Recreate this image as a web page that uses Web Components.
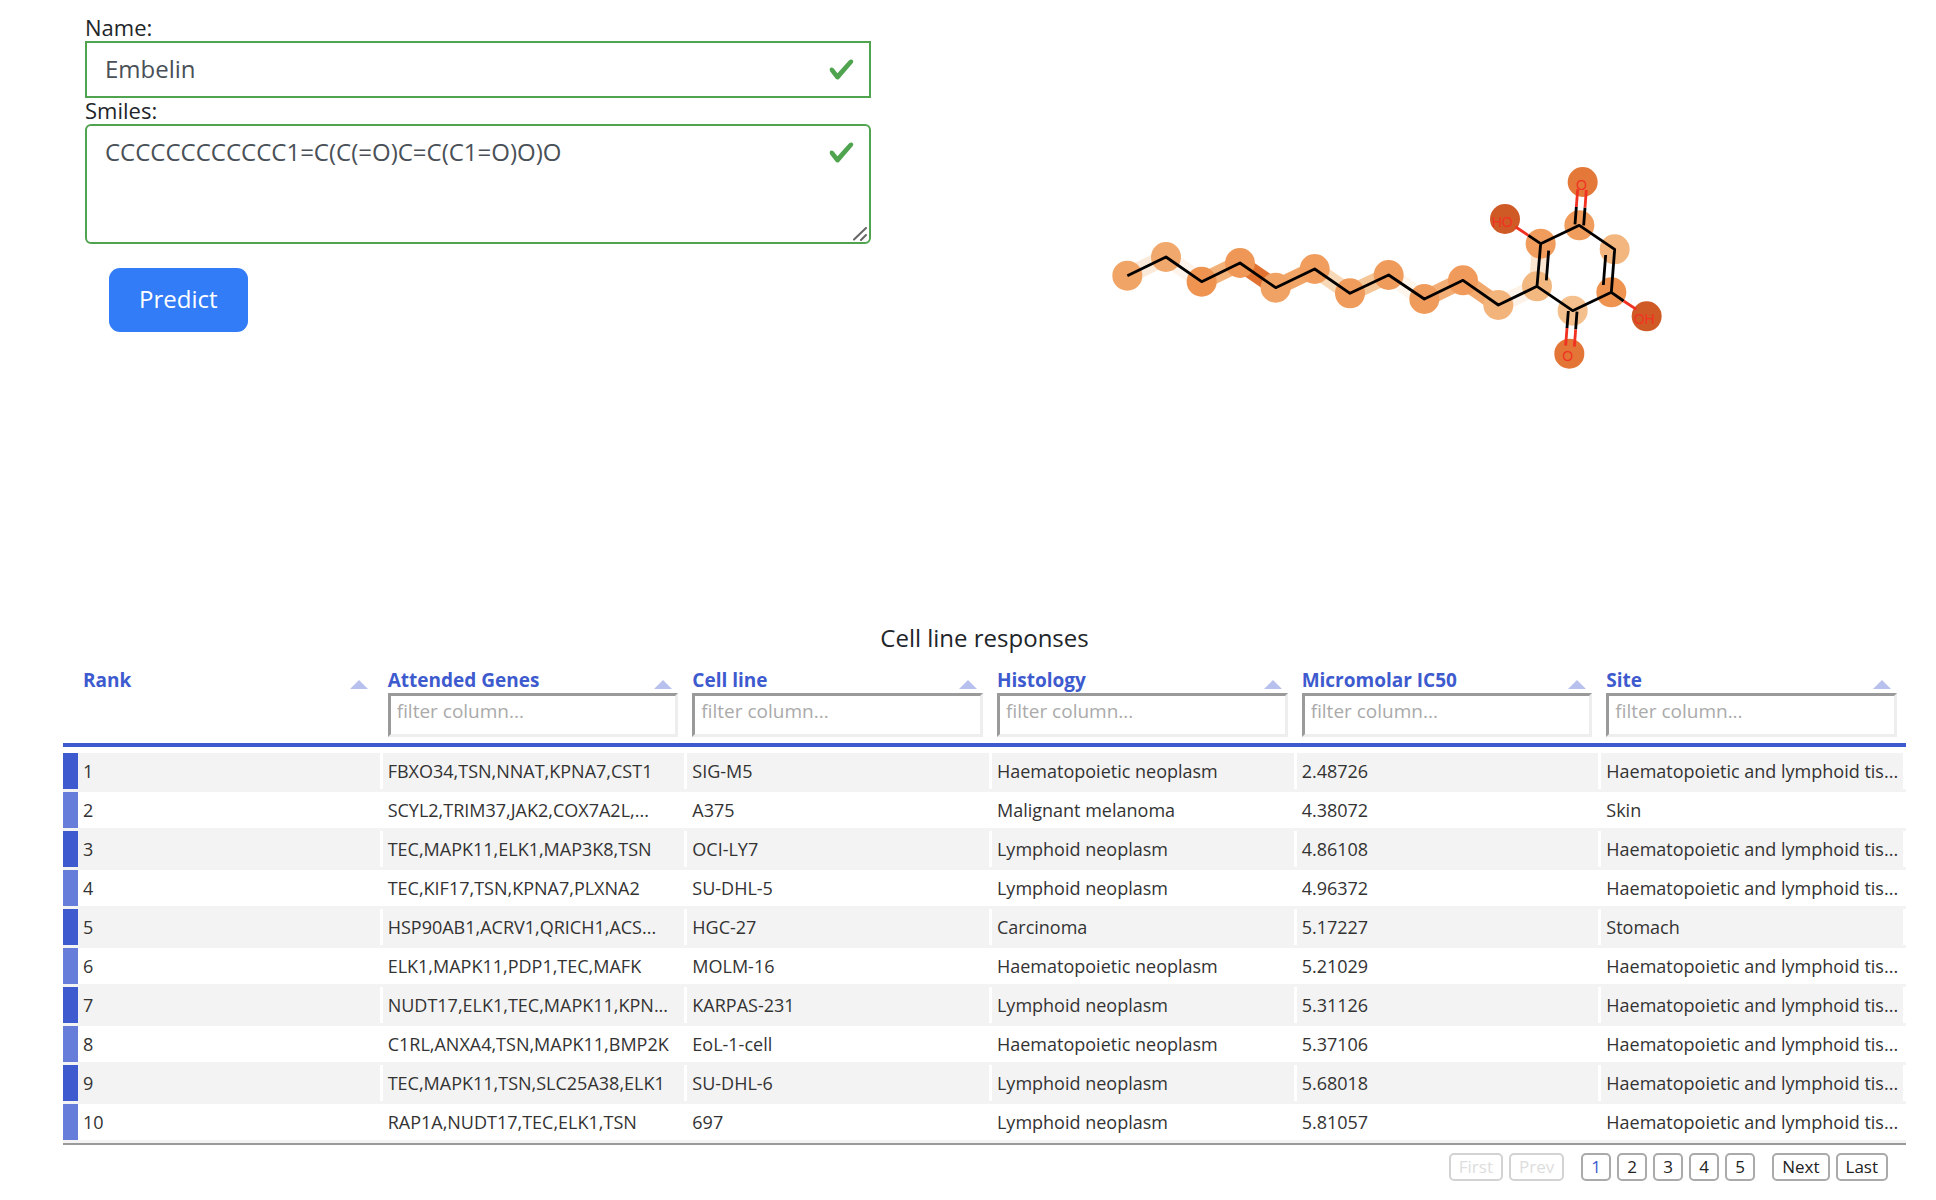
<!DOCTYPE html>
<html lang="en">
<head>
<meta charset="utf-8">
<title>Cell line responses</title>
<style>
  body { margin: 0; background: #fff; color: #212529; font-family: "Open Sans", "Noto Sans", sans-serif; }
</style>
</head>
<body>
<predict-page></predict-page>

<template id="page-tpl">
  <style>
    :host { display: block; }
    .top { display: grid; grid-template-columns: 1fr 1fr; min-height: 530px; }
    .form { padding: 15px 97px 0 85px; }
    .view { display: flex; align-items: center; justify-content: center; padding-right: 124px; }
    .results { padding: 91px 30px 16px 63px; }
  </style>
  <section class="top">
    <compound-form class="form"></compound-form>
    <div class="view"><molecule-view></molecule-view></div>
  </section>
  <section class="results"><response-table></response-table></section>
</template>

<template id="form-tpl">
  <style>
    :host { display: block; }
    form { display: flex; flex-direction: column; }
    label { font-size: 22px; line-height: 24px; padding-bottom: 2px; }
    .field { display: grid; }
    .field > * { grid-area: 1 / 1; }
    input, textarea {
      box-sizing: border-box; width: 100%; margin: 0; padding: 8px 56px 10px 18px;
      border: 2px solid #50a450; background: #fff; color: #495057;
      font: 24px/36px "Open Sans", "Noto Sans", sans-serif; outline: none;
    }
    input { height: 57px; border-radius: 0; }
    textarea { height: 120px; border-radius: 6px; resize: none; display: block; }
    .tick { justify-self: end; width: 27px; height: 27px; margin: 15px 16px 0 0; }
    .grip { place-self: end; width: 14px; height: 14px; margin: 0 4px 3px 0; }
    button {
      align-self: flex-start; margin: 24px; height: 64px; padding: 0 30px 2px; border: 0; border-radius: 11px;
      background: #327cf7; color: #fff; font: 24px/36px "Open Sans", "Noto Sans", sans-serif;
    }
  </style>
  <form onsubmit="return false">
    <label for="name">Name:</label>
    <div class="field">
      <input id="name" type="text" value="Embelin">
      <svg class="tick" viewBox="0 0 8 8" aria-hidden="true"><path fill="#50a450" d="M2.3 6.73L.6 4.53c-.4-1.04.46-1.4 1.1-.8l1.1 1.4 3.4-3.8c.6-.63 1.6-.27 1.2.7l-4 4.6c-.43.5-.8.4-1.1.1z"/></svg>
    </div>
    <label for="smiles">Smiles:</label>
    <div class="field">
      <textarea id="smiles" spellcheck="false">CCCCCCCCCCCC1=C(C(=O)C=C(C1=O)O)O</textarea>
      <svg class="tick" viewBox="0 0 8 8" aria-hidden="true"><path fill="#50a450" d="M2.3 6.73L.6 4.53c-.4-1.04.46-1.4 1.1-.8l1.1 1.4 3.4-3.8c.6-.63 1.6-.27 1.2.7l-4 4.6c-.43.5-.8.4-1.1.1z"/></svg>
      <svg class="grip" viewBox="0 0 14 14" aria-hidden="true"><path stroke="#666" stroke-width="2" stroke-linecap="round" d="M1 12.5L13 1M8 13L13 8"/></svg>
    </div>
    <button type="submit">Predict</button>
  </form>
</template>

<template id="molecule-tpl">
  <style>
    :host { display: block; width: 100%; max-width: 580px; }
    svg { display: block; width: 100%; height: auto; }
    text { font: 42px "Liberation Sans", Arial, sans-serif; fill: #f03223; }
  </style>
  <svg viewBox="0 0 1740 690" role="img" aria-label="Embelin molecule">
    <g id="halos" stroke-width="50"></g>
    <g id="atoms"></g>
    <g fill="none" stroke="#000" stroke-width="8.500" stroke-linejoin="round">
      <path d="M82 377L198 321L305 395L420 339L527 413L644 357L750 430L866 375L973 447L1089 391L1195 465L1311 409L1322 281L1438 226L1544 298L1534 427L1418 482L1311 409M1346 302L1339 391M1517 315L1510 405M1322 281L1285 256M1534 427L1571 453"/>
      <path d="M1425 223L1429 171M1451 226L1455 173M1405 483L1401 534M1431 485L1427 538"/>
    </g>
    <g fill="none" stroke="#f03223" stroke-width="8.500">
      <path d="M1429 171L1433 118M1455 173L1459 120M1401 534L1397 587M1427 538L1423 590M1285 256L1247 231M1571 453L1609 478"/>
    </g>
    <text x="1428" y="120">O</text><text x="1175" y="231">HO</text><text x="1601" y="522">OH</text><text x="1387" y="633">O</text>
  </svg>
</template>

<template id="table-tpl">
  <style>
    :host { display: block; }
    h2 { margin: 0; text-align: center; font-size: 24px; line-height: 34px; font-weight: 400; }
    table { width: 100%; margin-top: 12px; border-collapse: separate; border-spacing: 0; table-layout: fixed; }
    .mark { width: 15px; padding: 0; }
    th { height: 71px; padding: 0 0 5px; border-bottom: 4px solid #3d5ace; vertical-align: top; text-align: left; font-weight: 400; }
    td { padding: 0; border-bottom: 3px solid #f3f3f3; font-size: 18px; line-height: 36px; color: #333; }
    .gap td { height: 6px; border: 0; line-height: 0; }
    .cell { box-sizing: border-box; height: 36px; padding-left: 5px; border-right: 3px solid #fff; white-space: nowrap; overflow: hidden; }
    .rows tr:nth-child(odd) .cell { background: #f3f3f3; }
    .rows tr:nth-child(odd) .mark { background: #3d5ace padding-box; }
    .rows tr:nth-child(even) .mark { background: #667dda padding-box; }
    .rows tr:last-child td { box-shadow: 0 2px #999; }
  </style>
  <h2>Cell line responses</h2>
  <table>
    <colgroup><col class="mark"><col><col><col><col><col><col></colgroup>
    <thead></thead>
    <tbody class="gap"><tr><td colspan="7"></td></tr></tbody>
    <tbody class="rows"></tbody>
  </table>
  <page-buttons></page-buttons>
</template>

<template id="head-tpl">
  <style>
    :host { display: block; padding: 0 9px 0 5px; }
    .name { display: flex; justify-content: space-between; align-items: center; height: 26px; padding-right: 6px; font-size: 19px; line-height: 26px; font-weight: 700; color: #3d5ace; }
    .sort { margin-top: 9px; width: 18px; height: 9px; }
    input {
      display: block; box-sizing: border-box; width: 100%; height: 44px; margin: 0; padding: 0 6px 8px;
      border: 3px solid; border-color: #9a9a9a #eee #eee #9a9a9a; border-radius: 0; background: #fff;
      font: 19px/26px "Open Sans", "Noto Sans", sans-serif; outline: none;
    }
    input::placeholder { color: #aaa; opacity: 1; }
  </style>
  <div class="name"><slot></slot><svg class="sort" viewBox="0 0 18 9" aria-hidden="true"><path fill="#b8c1ee" d="M0 9L9 0L18 9z"/></svg></div>
</template>

<template id="pages-tpl">
  <style>
    :host { display: flex; justify-content: flex-end; gap: 17px; padding: 10px 18px 0 0; }
    div { display: flex; gap: 6px; }
    button {
      height: 28px; min-width: 30px; padding: 0 8px; border: 2px solid #aaa; border-radius: 5px; background: #fff;
      color: #222; font: 17px/24px "Open Sans", "Noto Sans", sans-serif;
    }
    button:disabled { border-color: #d3d3d3; color: #ddd; }
    .current { color: #3d5ace; }
  </style>
  <div><button disabled>First</button><button disabled>Prev</button></div>
  <div><button class="current" aria-current="page">1</button><button>2</button><button>3</button><button>4</button><button>5</button></div>
  <div><button>Next</button><button>Last</button></div>
</template>

<script>
  const stamp = (host, id) => {
    const root = host.attachShadow({ mode: 'open' });
    root.append(document.getElementById(id).content.cloneNode(true));
    return root;
  };

  class CompoundForm extends HTMLElement {
    constructor() { super(); stamp(this, 'form-tpl'); }
  }

  /* Skeletal drawing with a disc per atom and a band per bond, shaded by attention weight. */
  class MoleculeView extends HTMLElement {
    constructor() {
      super();
      const root = stamp(this, 'molecule-tpl');
      const atoms = [
        [82, 377, '#f0a566'], [198, 321, '#f0a86c'], [305, 395, '#ee9350'], [420, 339, '#ee9756'],
        [527, 413, '#f0a264'], [644, 357, '#f09d5e'], [750, 430, '#ef9b5b'], [866, 375, '#ef9b5b'],
        [973, 447, '#ef9b5b'], [1089, 391, '#f09b5b'], [1195, 465, '#f2b47b'], [1311, 409, '#f2b880'],
        [1322, 281, '#f09c5c'], [1438, 226, '#f09c5c'], [1544, 298, '#f2b67e'], [1534, 427, '#ee9350'],
        [1418, 482, '#f4c08d'], [1448, 96, '#e37838'], [1215, 207, '#cf5a25'], [1640, 499, '#cf5a25'], [1408, 611, '#e37636']
      ];
      const bands = [[0, 1, '#fbead9'], [1, 2, '#fef4eb'], [2, 3, '#f3b27a'], [3, 4, '#e27231'], [4, 5, '#f0a566'],
        [5, 6, '#f8d9b7'], [6, 7, '#f5c697'], [7, 8, '#fef5ed'], [8, 9, '#f2ae75'], [9, 10, '#f1a96e'],
        [10, 11, '#fcf2e7'], [11, 12, '#fae5d0']];
      const el = (tag, attrs) => {
        const n = document.createElementNS('http://www.w3.org/2000/svg', tag);
        for (const k in attrs) n.setAttribute(k, attrs[k]);
        return n;
      };
      root.getElementById('halos').append(...bands.map(([a, b, stroke]) =>
        el('line', { x1: atoms[a][0], y1: atoms[a][1], x2: atoms[b][0], y2: atoms[b][1], stroke })));
      root.getElementById('atoms').append(...atoms.map(([cx, cy, fill]) => el('circle', { cx, cy, r: 45, fill })));
    }
  }

  class ColumnHead extends HTMLElement {
    constructor() {
      super();
      const root = stamp(this, 'head-tpl');
      if (this.hasAttribute('filter')) {
        const input = document.createElement('input');
        input.type = 'search';
        input.placeholder = 'filter column...';
        input.setAttribute('aria-label', 'Filter ' + this.textContent);
        root.append(input);
      }
    }
  }

  class PageButtons extends HTMLElement {
    constructor() { super(); stamp(this, 'pages-tpl'); }
  }

  const COLUMNS = ['Rank', 'Attended Genes', 'Cell line', 'Histology', 'Micromolar IC50', 'Site'];
  const LYMPH = 'Haematopoietic and lymphoid tis...';
  const ROWS = [
    ['FBXO34,TSN,NNAT,KPNA7,CST1', 'SIG-M5', 'Haematopoietic neoplasm', '2.48726', LYMPH],
    ['SCYL2,TRIM37,JAK2,COX7A2L,...', 'A375', 'Malignant melanoma', '4.38072', 'Skin'],
    ['TEC,MAPK11,ELK1,MAP3K8,TSN', 'OCI-LY7', 'Lymphoid neoplasm', '4.86108', LYMPH],
    ['TEC,KIF17,TSN,KPNA7,PLXNA2', 'SU-DHL-5', 'Lymphoid neoplasm', '4.96372', LYMPH],
    ['HSP90AB1,ACRV1,QRICH1,ACS...', 'HGC-27', 'Carcinoma', '5.17227', 'Stomach'],
    ['ELK1,MAPK11,PDP1,TEC,MAFK', 'MOLM-16', 'Haematopoietic neoplasm', '5.21029', LYMPH],
    ['NUDT17,ELK1,TEC,MAPK11,KPN...', 'KARPAS-231', 'Lymphoid neoplasm', '5.31126', LYMPH],
    ['C1RL,ANXA4,TSN,MAPK11,BMP2K', 'EoL-1-cell', 'Haematopoietic neoplasm', '5.37106', LYMPH],
    ['TEC,MAPK11,TSN,SLC25A38,ELK1', 'SU-DHL-6', 'Lymphoid neoplasm', '5.68018', LYMPH],
    ['RAP1A,NUDT17,TEC,ELK1,TSN', '697', 'Lymphoid neoplasm', '5.81057', LYMPH]
  ];

  class ResponseTable extends HTMLElement {
    constructor() {
      super();
      const root = stamp(this, 'table-tpl');
      root.querySelector('thead').innerHTML = '<tr><th class="mark"></th>' +
        COLUMNS.map((c, i) => `<th scope="col"><column-head${i ? ' filter' : ''}>${c}</column-head></th>`).join('') + '</tr>';
      root.querySelector('.rows').innerHTML = ROWS.map((r, i) => '<tr><td class="mark"></td>' +
        [i + 1, ...r].map(v => `<td><div class="cell">${v}</div></td>`).join('') + '</tr>').join('');
    }
  }

  class PredictPage extends HTMLElement {
    constructor() { super(); stamp(this, 'page-tpl'); }
  }

  customElements.define('compound-form', CompoundForm);
  customElements.define('molecule-view', MoleculeView);
  customElements.define('column-head', ColumnHead);
  customElements.define('page-buttons', PageButtons);
  customElements.define('response-table', ResponseTable);
  customElements.define('predict-page', PredictPage);
</script>
</body>
</html>
